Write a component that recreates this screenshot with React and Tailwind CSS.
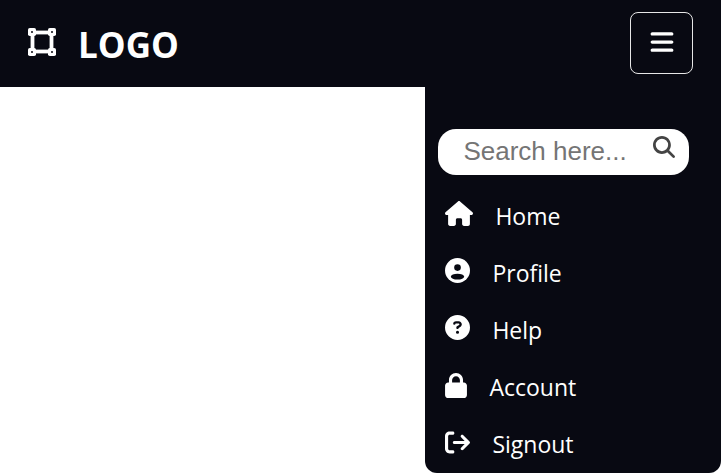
import { useState } from "react";
import {
  FaArrowRightFromBracket,
  FaBars,
  FaCircleQuestion,
  FaHouse,
  FaLock,
  FaMagnifyingGlass,
} from "react-icons/fa6";

function FrameIcon({ className }) {
  return (
    <svg viewBox="0 0 28 28" className={className} aria-hidden="true">
      <rect x="4.5" y="4.5" width="19" height="19" fill="none" stroke="currentColor" strokeWidth="3.8" />
      <g fill="currentColor">
        <rect x="0" y="0" width="8" height="8" rx="1.8" />
        <rect x="20" y="0" width="8" height="8" rx="1.8" />
        <rect x="0" y="20" width="8" height="8" rx="1.8" />
        <rect x="20" y="20" width="8" height="8" rx="1.8" />
      </g>
      <g fill="#080912">
        <circle cx="4" cy="4" r="1" />
        <circle cx="24" cy="4" r="1" />
        <circle cx="4" cy="24" r="1" />
        <circle cx="24" cy="24" r="1" />
      </g>
    </svg>
  );
}

function UserIcon({ className }) {
  return (
    <svg viewBox="0 0 512 512" className={className} aria-hidden="true">
      <circle cx="256" cy="256" r="256" fill="currentColor" />
      <g fill="#080912">
        <circle cx="256" cy="196" r="68" />
        <ellipse cx="256" cy="382" rx="136" ry="60" />
      </g>
    </svg>
  );
}

const links = [
  { label: "Home", Icon: FaHouse, size: "h-[25px] w-7" },
  { label: "Profile", Icon: UserIcon, size: "size-[25px]" },
  { label: "Help", Icon: FaCircleQuestion, size: "size-[25px]" },
  { label: "Account", Icon: FaLock, size: "h-[25px] w-[22px]" },
  { label: "Signout", Icon: FaArrowRightFromBracket, size: "size-[25px]" },
];

export default function App() {
  const [open, setOpen] = useState(true);

  return (
    <div className="min-h-screen bg-white font-['Segoe_UI','Open_Sans',sans-serif] text-white">
      <header className="flex items-start justify-between bg-[#080912] pt-3 pr-7 pb-[13px] pl-7">
        <a href="#home" className="flex h-[62px] items-center gap-[22px]">
          <FrameIcon className="mb-0.5 size-7" />
          <span className="pt-1 text-[35px] leading-[48px] font-bold">LOGO</span>
        </a>
        <button
          type="button"
          aria-label="Toggle menu"
          aria-expanded={open}
          onClick={() => setOpen(!open)}
          className="flex h-[62px] w-[63px] items-center justify-center rounded-lg border border-white/90 pb-0.5"
        >
          <FaBars className="size-[26px]" />
        </button>
      </header>
      {open && (
        <nav className="ml-auto w-[41%] rounded-b-xl bg-[#080912] pt-[42px]">
          <form
            className="mr-8 ml-[13px] flex h-[46px] items-center rounded-[18px] bg-white pr-[14px] pl-[25px]"
            onSubmit={(e) => e.preventDefault()}
          >
            <input
              type="search"
              aria-label="Search"
              placeholder="Search here..."
              className="min-w-0 flex-1 bg-transparent pb-0.5 font-['Liberation_Sans',Arial,sans-serif] text-[26px] leading-8 text-[#333] outline-none placeholder:text-[#757575]"
            />
            <button type="submit" aria-label="Search" className="mb-2.5 text-[#444]">
              <FaMagnifyingGlass className="size-[22px]" />
            </button>
          </form>
          <ul className="mt-3 grid h-[286px] grid-rows-5 pl-5">
            {links.map(({ label, Icon, size }) => (
              <li key={label} className="flex items-center">
                <a href={"#" + label.toLowerCase()} className="flex items-center gap-[22px] text-[23px] leading-8">
                  <Icon className={"mb-1 " + size} aria-hidden="true" />
                  {label}
                </a>
              </li>
            ))}
          </ul>
        </nav>
      )}
    </div>
  );
}
